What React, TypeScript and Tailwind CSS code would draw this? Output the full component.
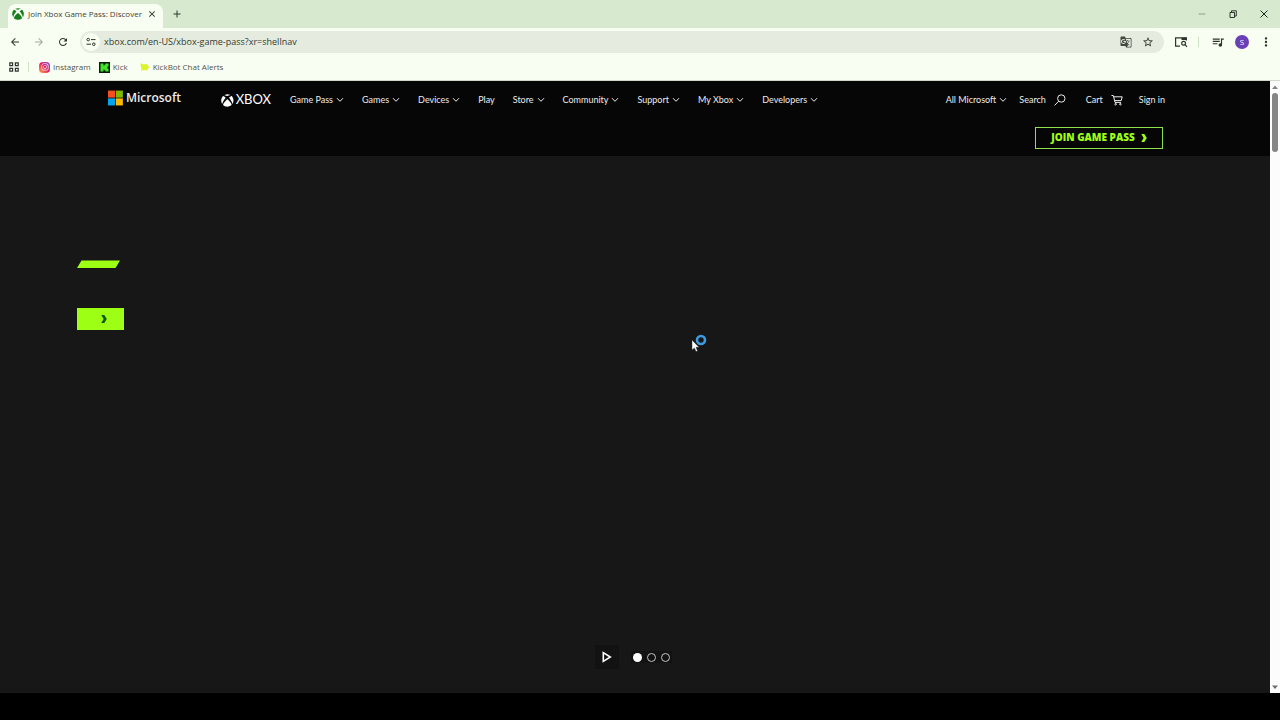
import type { ReactNode } from "react";
import { FaInstagram, FaXbox } from "react-icons/fa";
import {
  MdArrowBack,
  MdArrowForward,
  MdClose,
  MdGTranslate,
  MdMoreVert,
  MdQueueMusic,
  MdRefresh,
  MdStarBorder,
} from "react-icons/md";
import clsx from "clsx";

const NAV_ITEMS = [
  { label: "Game Pass", menu: true },
  { label: "Games", menu: true },
  { label: "Devices", menu: true },
  { label: "Play", menu: false },
  { label: "Store", menu: true },
  { label: "Community", menu: true },
  { label: "Support", menu: true },
  { label: "My Xbox", menu: true },
  { label: "Developers", menu: true },
];

function IconButton({ label, className, children }: { label: string; className?: string; children: ReactNode }) {
  return (
    <button type="button" aria-label={label} className={clsx("flex shrink-0 items-center justify-center", className)}>
      {children}
    </button>
  );
}

function Chevron() {
  return (
    <svg viewBox="0 0 8 6" className="h-1.5 w-2 shrink-0" fill="none" stroke="currentColor" strokeWidth="1">
      <path d="M1 1.2 4 4.3 7 1.2" />
    </svg>
  );
}

function BoldChevron() {
  return (
    <svg viewBox="0 0 6 8" className="h-2 w-1.5 shrink-0" fill="currentColor">
      <path d="M0.3 0H3.3L5.8 4 3.3 8H0.3L2.6 4Z" />
    </svg>
  );
}

function TabStrip() {
  return (
    <div className="flex h-7 items-end bg-[#d7e9ce] pl-2">
      <div className="flex h-6 w-[155px] items-center rounded-t-lg bg-[#f9fef2] pr-1.5 pb-1 pl-1">
        <FaXbox className="size-3 shrink-0 text-[#15801b]" />
        <span className="ml-1 text-[8px] whitespace-nowrap text-[#3c4239]">Join Xbox Game Pass: Discover</span>
        <IconButton label="Close tab" className="ml-auto size-2.5 text-[#20251e]">
          <MdClose className="size-2.5" />
        </IconButton>
      </div>
      <IconButton label="New tab" className="mb-2 ml-2 size-3 text-[#2f382c]">
        <svg viewBox="0 0 8 8" className="size-2" stroke="currentColor">
          <path d="M4 0.5V7.5M0.5 4H7.5" />
        </svg>
      </IconButton>
      <div className="mr-2.5 mb-2 ml-auto flex items-center gap-[19px] text-[#20251e]">
        <IconButton label="Minimize" className="size-3 text-[#93a08c]">
          <svg viewBox="0 0 8 8" className="size-2" stroke="currentColor">
            <path d="M0.5 4H7.5" />
          </svg>
        </IconButton>
        <IconButton label="Restore" className="size-3">
          <svg viewBox="0 0 8 8" className="size-2" fill="none" stroke="currentColor" strokeWidth="0.9">
            <path d="M1 2.5H5.5V7.5H1ZM2.5 2.5V0.8H7.3V6H5.5" />
          </svg>
        </IconButton>
        <IconButton label="Close" className="size-3">
          <svg viewBox="0 0 8 8" className="size-2" stroke="currentColor">
            <path d="M0.5 0.5 7.5 7.5M7.5 0.5 0.5 7.5" />
          </svg>
        </IconButton>
      </div>
    </div>
  );
}

function Toolbar() {
  return (
    <div className="flex h-7 items-center pr-[7px] pl-[9px]">
      <IconButton label="Back" className="size-3 text-[#2f342d]">
        <MdArrowBack className="size-3" />
      </IconButton>
      <IconButton label="Forward" className="ml-3 size-3 text-[#a4aa9f]">
        <MdArrowForward className="size-3" />
      </IconButton>
      <IconButton label="Reload" className="ml-3 size-3 text-[#2f342d]">
        <MdRefresh className="size-3" />
      </IconButton>
      <form className="ml-[11px] flex h-[22px] min-w-0 flex-1 items-center rounded-full bg-[#e5ecdf] pr-2.5 pl-0.5">
        <IconButton label="View site information" className="size-[18px] rounded-full bg-[#f9fef2] text-[#2f342d]">
          <svg viewBox="0 0 10 10" className="size-2.5" fill="none" stroke="currentColor">
            <circle cx="2.2" cy="2.6" r="1.3" />
            <path d="M5 2.6H9.5M0.5 7.2H5" />
            <circle cx="7.8" cy="7.2" r="1.3" />
          </svg>
        </IconButton>
        <input
          type="text"
          aria-label="Address and search bar"
          defaultValue="xbox.com/en-US/xbox-game-pass?xr=shellnav"
          className="ml-1 min-w-0 flex-1 bg-transparent text-[9px] text-[#343a31] outline-none"
        />
        <IconButton label="Translate this page" className="size-3 text-[#41473e]">
          <MdGTranslate className="size-3" />
        </IconButton>
        <IconButton label="Bookmark this tab" className="ml-2.5 size-3 text-[#2f342d]">
          <MdStarBorder className="size-3" />
        </IconButton>
      </form>
      <IconButton label="Search tabs" className="ml-2.5 size-3.5 text-[#2f342d]">
        <svg viewBox="0 0 14 12" className="h-3 w-3.5" fill="none" stroke="currentColor" strokeWidth="1.2">
          <path d="M6 10.2H1.6V1.8H12.4V4.5" />
          <path d="M7.5 2.8H12.4" strokeWidth="2.4" />
          <circle cx="9.6" cy="7.3" r="1.9" />
          <path d="M11 8.7 13 10.9" />
        </svg>
      </IconButton>
      <span className="ml-2.5 h-2.5 w-px bg-[#cfe0c5]" />
      <IconButton label="Media controls" className="ml-3 size-3.5 text-[#2f342d]">
        <MdQueueMusic className="size-3.5" />
      </IconButton>
      <button
        type="button"
        className="ml-2.5 flex size-3.5 shrink-0 items-center justify-center rounded-full bg-[#6b3fb5] text-[8px] text-white"
      >
        S
      </button>
      <IconButton label="Customize and control" className="ml-2.5 size-3.5 text-[#2f342d]">
        <MdMoreVert className="size-3.5" />
      </IconButton>
    </div>
  );
}

function BookmarksBar() {
  return (
    <nav aria-label="Bookmarks" className="flex h-[25px] items-center border-b border-[#cfd8ca] pb-0.5 pl-2 text-[8px] text-[#50564d]">
      <IconButton label="Apps" className="size-3 text-[#2f342d]">
        <svg viewBox="0 0 10 10" className="size-2.5" fill="none" stroke="currentColor" strokeWidth="1.2">
          <path d="M0.8 0.8h2.8v2.8h-2.8zM6.4 0.8h2.8v2.8h-2.8zM0.8 6.4h2.8v2.8h-2.8zM6.4 6.4h2.8v2.8h-2.8z" />
        </svg>
      </IconButton>
      <span className="mx-2 h-2.5 w-px bg-[#cfe0c5]" />
      <a href="#instagram" className="ml-0.5 flex items-center gap-[3px]">
        <span className="flex size-[11px] items-center justify-center rounded-sm bg-linear-to-tr from-[#ff9f2c] via-[#e8185f] to-[#8a1be0]">
          <FaInstagram className="size-2 text-white" />
        </span>
        Instagram
      </a>
      <a href="#kick" className="ml-2 flex items-center gap-[3px]">
        <svg viewBox="0 0 11 11" className="size-[11px]">
          <path fill="#0b1a08" d="M0 0h11v11H0z" />
          <path fill="#3fe62a" d="M1.5 1.5h3v2h1v-1h1v-1h3v3h-1v2h1v3h-3v-1h-1v-1h-1v2h-3z" />
        </svg>
        Kick
      </a>
      <a href="#kickbot" className="ml-3 flex items-center gap-[3px]">
        <svg viewBox="0 0 10 10" className="size-2.5" fill="#dcf52a">
          <path d="M0.5 1 3 2.2H7.5L8.3 4.2 9.8 5 8.3 6.2 7.5 8.3H2L0.8 9.4 1.5 7 0.8 4.5Z" />
        </svg>
        KickBot Chat Alerts
      </a>
    </nav>
  );
}

function SiteHeader() {
  return (
    <header className="bg-[#060606] pr-[105px] pl-[108px]">
      <div className="flex h-[38px] items-center font-[Lato,sans-serif] text-[9px] whitespace-nowrap text-[#ececec]">
        <a href="#microsoft" className="mb-1 flex w-[73px] items-center gap-[3px] font-['Open_Sans',sans-serif] text-[12px] font-semibold">
          <svg viewBox="0 0 16 16" className="size-4">
            <path fill="#f25022" d="M0 0h7.6v7.6H0z" />
            <path fill="#7fba00" d="M8.4 0H16v7.6H8.4z" />
            <path fill="#00a4ef" d="M0 8.4h7.6V16H0z" />
            <path fill="#ffb900" d="M8.4 8.4H16V16H8.4z" />
          </svg>
          Microsoft
        </a>
        <a href="#xbox" className="ml-10 flex w-[50px] items-center gap-0.5 text-[13px] text-white">
          <FaXbox className="size-[15px]" />
          XBOX
        </a>
        <nav aria-label="Xbox" className="ml-[19px] flex items-center gap-[18px]">
          {NAV_ITEMS.map(({ label, menu }) =>
            menu ? (
              <button key={label} type="button" className="flex items-center gap-[3px]">
                {label}
                <Chevron />
              </button>
            ) : (
              <a key={label} href="#play">
                {label}
              </a>
            )
          )}
        </nav>
        <div className="ml-auto flex items-center">
          <button type="button" className="flex items-center gap-[3px]">
            All Microsoft
            <Chevron />
          </button>
          <button type="button" className="ml-3 flex items-center gap-2">
            Search
            <svg viewBox="0 0 12 12" className="size-3" fill="none" stroke="currentColor">
              <circle cx="7.3" cy="4.5" r="3.7" />
              <path d="M4.7 7.2 0.6 11.4" />
            </svg>
          </button>
          <a href="#cart" className="ml-5 flex items-center gap-2">
            Cart
            <svg viewBox="0 0 12 12" className="size-3" fill="none" stroke="currentColor">
              <path d="M0.5 1.5H2.3L4 8.4H10M2.7 2.8H11.2L10.2 6.6H3.5" />
              <circle cx="4.6" cy="10.2" r="0.8" />
              <circle cx="9.4" cy="10.2" r="0.8" />
            </svg>
          </a>
          <a href="#signin" className="ml-4">
            Sign in
          </a>
        </div>
      </div>
      <div className="flex h-[37px] items-center justify-end pr-0.5">
        <a
          href="#join"
          className="flex h-[22px] w-[128px] items-center justify-center gap-1.5 border border-[#8fe04a] text-[10px] font-extrabold whitespace-nowrap text-[#9dff14]"
        >
          JOIN GAME PASS
          <BoldChevron />
        </a>
      </div>
    </header>
  );
}

function Hero() {
  return (
    <section className="relative flex flex-1 flex-col bg-[#171717] pt-[104px] pb-6">
      <div className="flex flex-col items-start gap-10 pl-[77px]">
        <svg viewBox="0 0 43 8" className="h-2 w-[43px]" fill="#9dff14">
          <path d="M4.5 0.5H43L38.5 8H0Z" />
        </svg>
        <button
          type="button"
          aria-label="Join"
          className="flex h-[22px] w-[47px] items-center justify-center bg-[#9dff14] pl-1.5 text-[#0b5a12]"
        >
          <BoldChevron />
        </button>
      </div>
      <div className="mt-auto flex items-center justify-center gap-3 pr-1">
        <IconButton label="Play carousel" className="size-6 bg-[#121212] text-white">
          <svg viewBox="0 0 10 12" className="h-3 w-2.5" fill="none" stroke="currentColor" strokeWidth="1.6">
            <path d="M1.3 1.6V10.4L8.3 6Z" />
          </svg>
        </IconButton>
        <div className="flex h-3 items-center gap-[5px] bg-[#121212] px-0.5">
          <button type="button" aria-label="Slide 1" className="size-[9px] rounded-full bg-white" />
          <button type="button" aria-label="Slide 2" className="size-[9px] rounded-full border border-[#c4c4c4]" />
          <button type="button" aria-label="Slide 3" className="size-[9px] rounded-full border border-[#c4c4c4]" />
        </div>
      </div>
      <svg viewBox="0 0 16 20" className="absolute top-[177px] left-[691px] h-5 w-4" fill="none">
        <circle cx="10" cy="7" r="4" stroke="#3d9be0" strokeWidth="2.6" />
        <path d="M1 7V17L3.4 14.9 5 18.6 6.6 17.9 5 14.3H8Z" fill="#fff" stroke="#222" strokeWidth="0.4" />
      </svg>
    </section>
  );
}

function Scrollbar() {
  return (
    <div className="flex w-2.5 shrink-0 flex-col items-center justify-between bg-[#fcfcfc] py-1">
      <div className="flex flex-col items-center gap-1">
        <svg viewBox="0 0 6 4" className="h-1 w-1.5" fill="#858585">
          <path d="M0 4 3 0.5 6 4Z" />
        </svg>
        <div className="h-[59px] w-1.5 rounded-full bg-[#858585]" />
      </div>
      <svg viewBox="0 0 6 4" className="h-1 w-1.5" fill="#6b6b6b">
        <path d="M0 0.5 3 4 6 0.5Z" />
      </svg>
    </div>
  );
}

export default function App() {
  return (
    <div className="flex min-h-screen flex-col bg-black font-['Open_Sans','Noto_Sans',sans-serif]">
      <div className="bg-[#f9fef2]">
        <TabStrip />
        <Toolbar />
        <BookmarksBar />
      </div>
      <div className="flex flex-1">
        <main className="flex min-w-0 flex-1 flex-col">
          <SiteHeader />
          <Hero />
        </main>
        <Scrollbar />
      </div>
      <div className="h-[27px] bg-black" />
    </div>
  );
}
